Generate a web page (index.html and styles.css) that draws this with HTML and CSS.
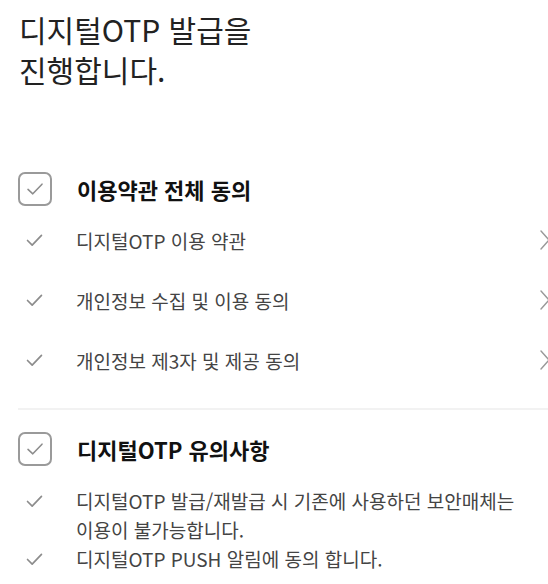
FILE: index.html
```html
<!doctype html>
<html lang="ko">
  <head>
    <meta charset="UTF-8" />
    <meta name="viewport" content="width=device-width, initial-scale=1.0" />
    <title>디지털OTP 발급</title>
    <link rel="stylesheet" href="styles.css">
  </head>
  <body>
    <div class="page">
      <h1 class="title">디지털OTP 발급을<br />진행합니다.</h1>

      <!-- 이용약관 -->
      <div class="section">
        <div class="section-head">
          <span class="checkbox">
            <svg viewBox="0 0 20 16" width="18" height="14"><path d="M2 8.5 L7.5 13.5 L18 2.5" /></svg>
          </span>
          <span class="section-title">이용약관 전체 동의</span>
        </div>
        <div class="terms">
          <div class="term">
            <svg class="tick" viewBox="0 0 18 14" width="17" height="13"><path d="M1.5 7 L6.5 12 L16.5 1.5" /></svg>
            <span class="term-text">디지털OTP 이용 약관</span>
            <svg class="chevron" viewBox="0 0 10 20" width="10" height="20"><path d="M1 1 L9 10 L1 19" /></svg>
          </div>
          <div class="term">
            <svg class="tick" viewBox="0 0 18 14" width="17" height="13"><path d="M1.5 7 L6.5 12 L16.5 1.5" /></svg>
            <span class="term-text">개인정보 수집 및 이용 동의</span>
            <svg class="chevron" viewBox="0 0 10 20" width="10" height="20"><path d="M1 1 L9 10 L1 19" /></svg>
          </div>
          <div class="term">
            <svg class="tick" viewBox="0 0 18 14" width="17" height="13"><path d="M1.5 7 L6.5 12 L16.5 1.5" /></svg>
            <span class="term-text">개인정보 제3자 및 제공 동의</span>
            <svg class="chevron" viewBox="0 0 10 20" width="10" height="20"><path d="M1 1 L9 10 L1 19" /></svg>
          </div>
        </div>
      </div>

      <div class="divider"></div>

      <!-- 유의사항 -->
      <div class="section">
        <div class="section-head">
          <span class="checkbox">
            <svg viewBox="0 0 20 16" width="18" height="14"><path d="M2 8.5 L7.5 13.5 L18 2.5" /></svg>
          </span>
          <span class="section-title">디지털OTP 유의사항</span>
        </div>
        <div class="notes">
          <div class="note">
            <svg class="tick" viewBox="0 0 18 14" width="17" height="13"><path d="M1.5 7 L6.5 12 L16.5 1.5" /></svg>
            <span class="note-text">디지털OTP 발급/재발급 시 기존에 사용하던 보안매체는 이용이 불가능합니다.</span>
          </div>
          <div class="note">
            <svg class="tick" viewBox="0 0 18 14" width="17" height="13"><path d="M1.5 7 L6.5 12 L16.5 1.5" /></svg>
            <span class="note-text">디지털OTP PUSH 알림에 동의 합니다.</span>
          </div>
        </div>
      </div>
    </div>
  </body>
</html>
```

FILE: styles.css
```css
html,
body {
  margin: 0;
  padding: 0;
  background: #fff;
  overflow: hidden;
}

body {
  font-family: 'Noto Sans CJK KR', 'Noto Sans', sans-serif;
  color: #222;
}

.page {
  padding: 9px 0 0 18px;
}

.title {
  margin: 0 0 83px 1px;
  font-size: 30px;
  line-height: 40px;
  font-weight: 400;
  color: #222;
}

.section-head {
  display: flex;
  align-items: center;
  gap: 25px;
}

.checkbox {
  width: 30px;
  height: 30px;
  border: 2px solid #9a9a9a;
  border-radius: 7px;
  display: flex;
  align-items: center;
  justify-content: center;
  flex-shrink: 0;
}

.checkbox svg path,
.tick path,
.chevron path {
  fill: none;
  stroke: #8c8c8c;
  stroke-width: 1.8;
  stroke-linecap: round;
  stroke-linejoin: round;
}

.section-title {
  font-size: 22px;
  font-weight: 700;
  color: #111;
  line-height: 34px;
}

.terms {
  margin-top: 4px;
  margin-right: -2px;
}

.term {
  display: flex;
  align-items: center;
  height: 60px;
}

.tick {
  flex-shrink: 0;
  margin: 0 33px 0 8px;
}

.term-text {
  flex: 1;
  font-size: 19px;
  color: #444;
}

.chevron path {
  stroke: #999;
  stroke-width: 1.4;
}

.divider {
  height: 2px;
  background: #f2f2f2;
  margin: 18px 0 22px;
}

.notes {
  margin-top: 20px;
}

.note {
  display: flex;
  align-items: flex-start;
  font-size: 19px;
  line-height: 29px;
  color: #444;
}

.note .tick {
  margin-top: 9px;
}

.note-text {
  flex: 1;
  padding-right: 14px;
  word-break: keep-all;
}
```
